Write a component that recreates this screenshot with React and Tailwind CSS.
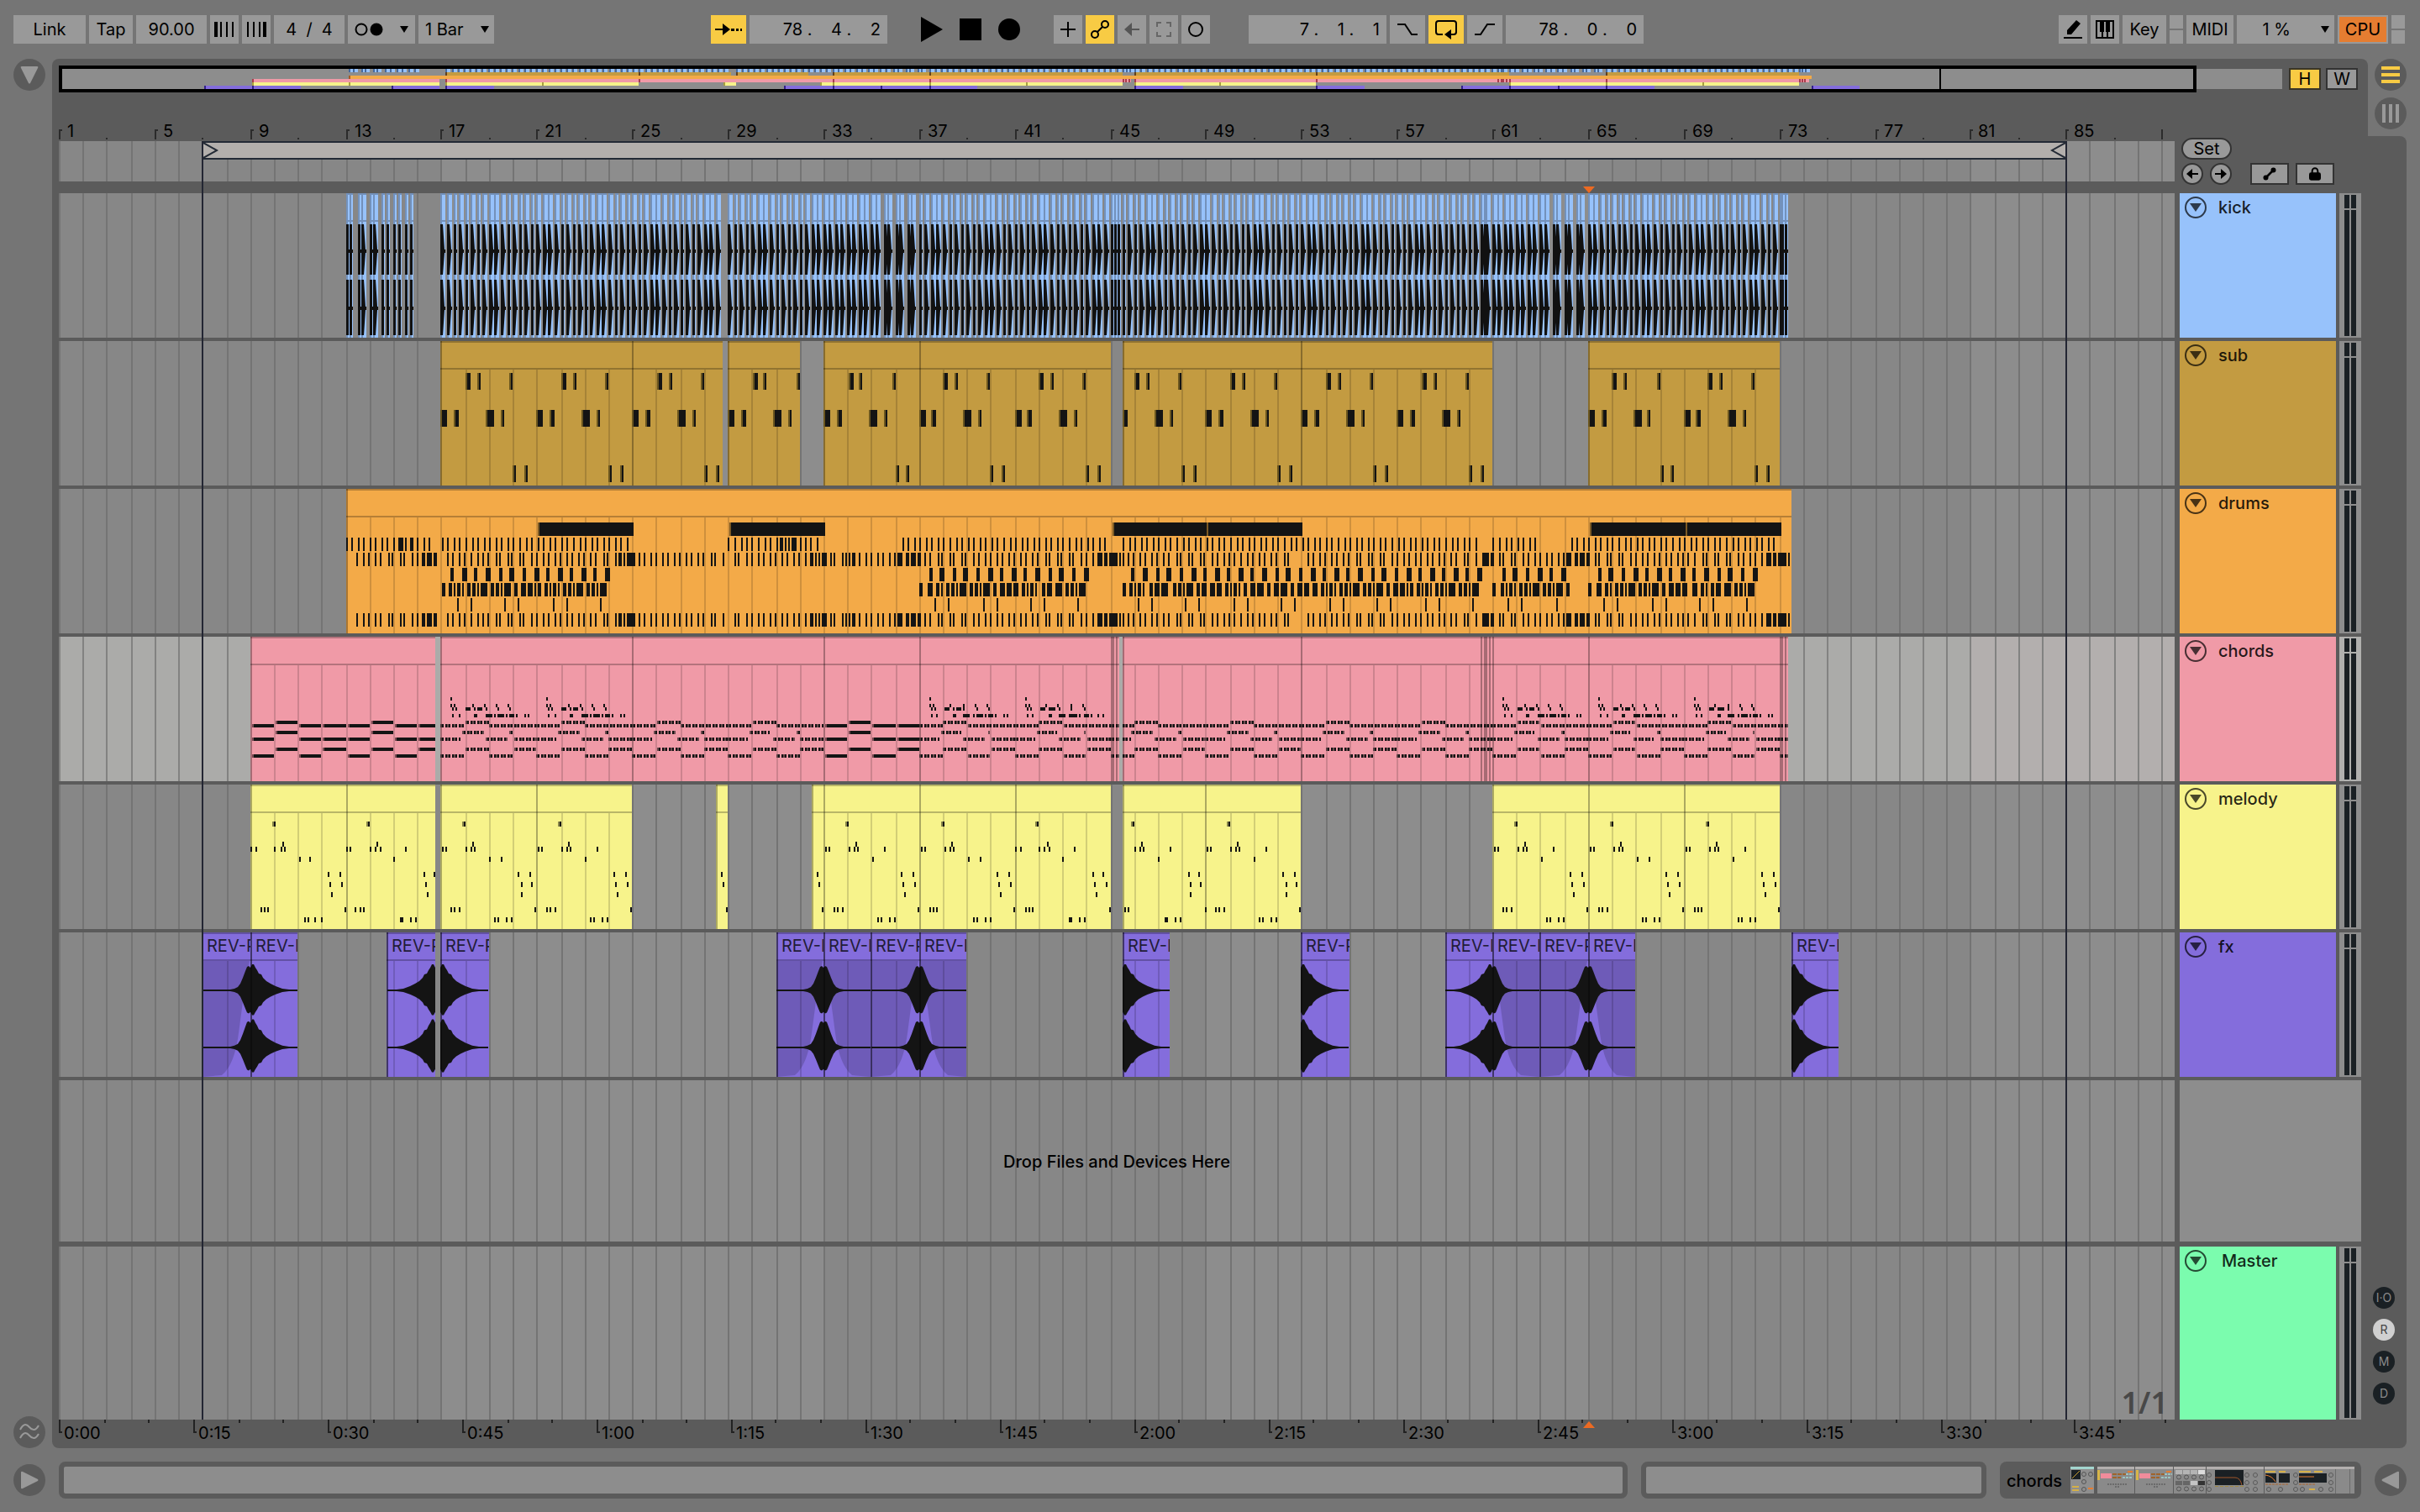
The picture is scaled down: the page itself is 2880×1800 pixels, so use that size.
import React from 'react';
import { Lock } from 'lucide-react';

const BAR = 28.435;
const LANE_W = 2518;
const NOTE = '#141414';

const snap = (px) => Math.round(px / 2) * 2;
const barX = (bar) => snap((bar - 1) * BAR);
const stepX = (bar, step) => snap((bar - 1) * BAR + (step * BAR) / 16);
const pct = (px, total = LANE_W) => `${(px / total) * 100}%`;
const range = (from, to, by = 1) => {
  const out = [];
  for (let i = from; i < to; i += by) out.push(i);
  return out;
};

/* ---------- song data: bars and sixteenth steps ---------- */

const KICK_BREAK = [0, 3.4, 8, 11.3, 15.8, 19, 23.6, 27, 31.5, 35, 40.5, 42.8, 48.4, 50.6, 56.3, 58.5];
const KICKS = [
  [13, [0, 2.4, 8, 10.4, 16, 18.4, 23.6, 27, 31.5, 35, 39.5, 43]],
  [17, range(0, 188, 4)],
  [29, range(0, 64, 4)],
  [33, KICK_BREAK],
  [37, range(0, 128, 4)],
  [45, [0, 2.2, 4.5]],
  [45.5, range(0, 240, 4)],
  [60.5, [0, 2.4, 3.5]],
  [61, KICK_BREAK],
  [65, range(0, 128, 4)],
  [73, [0, 1.2, 3.4]],
];

const SUB_CLIPS = [[17, 25], [25, 28.8], [29, 32], [33, 37], [37, 45], [45.5, 53], [53, 61], [65, 73]];
const SUB_NOTES = [
  [38, 16.4, 3.4], [38, 24, 2.3], [38, 45.7, 2.3],
  [82, 0, 4], [82, 8.6, 3], [82, 30, 5.7], [82, 40, 2.3],
  [148, 48, 2], [148, 55.7, 2],
];

const MELODY_CLIPS = [
  [9, 13], [13, 16.76], [17, 21], [21, 25], [28.5, 29], [32.5, 33], [33, 37], [37, 41],
  [41, 45], [45.5, 49], [49, 53], [61, 65], [65, 69], [69, 73],
];
const MELODY_NOTES = [
  [44, 14.4, 2.2], [68, 21.2, 1],
  [74, 0.8, 1], [74, 3.2, 1], [74, 16.6, 1], [74, 20, 1], [74, 22.4, 1],
  [104, 51.7, 1], [104, 59.4, 1], [116, 53, 1], [116, 60.6, 1], [128, 53.9, 1],
  [146, 6.6, 1], [146, 9, 1], [146, 12, 1], [146, 63, 1],
  [158, 36, 1], [158, 38, 1], [158, 43.6, 1], [158, 47, 1],
];
const MELODY_LONG = [9, 17, 37, 65];

const CHORD_CLIPS = [
  [9, 16.76], [17, 25], [25, 33], [33, 37], [37, 45], [45, 45.1], [45.1, 45.25], [45.25, 45.36],
  [45.5, 53], [53, 60.5], [60.5, 60.66], [60.66, 60.73], [60.73, 60.86], [60.86, 61],
  [61, 65], [65, 73], [73, 73.08], [73.08, 73.2], [73.2, 73.4],
];
const CHORD_HOLDS = [
  [104, 0, 16], [120, 0, 16], [140, 0, 16],
  [100, 16, 32], [112, 16, 32], [132, 16, 32],
  [104, 32, 48], [120, 32, 48], [140, 32, 48],
  [104, 48, 64], [120, 48, 64], [132, 48, 64],
];
const CHORD_STABS = [
  [100, 16.5, 32], [104, 0, 16], [104, 32.5, 64], [112, 14.5, 28.5], [112, 46, 48],
  [120, 0, 13.5], [120, 30, 44.5], [120, 48.5, 64], [132, 16.5, 32], [132, 48.5, 64],
  [140, 0, 16], [140, 32.5, 48],
];
const CHORD_TOPS = [
  [72, 6.6, 1], [80, 6.6, 1], [80, 9, 1], [80, 21, 1], [80, 29, 1], [80, 37, 1], [80, 45, 1],
  [84, 7.7, 1], [84, 10, 1], [84, 16.7, 3.4], [84, 22.4, 1], [84, 24.4, 3.4], [84, 30, 1], [84, 38, 1], [84, 46, 1],
  [92, 7.7, 1], [92, 12, 1], [92, 22.4, 2], [92, 30, 4.6], [92, 36, 1], [92, 38, 4.3], [92, 43.6, 1],
  [92, 46, 3.4], [92, 50.5, 1], [92, 56, 1], [92, 58.3, 1],
];

const HAT_LOOP = [
  4, 7.5, 11.8, 15.2, 19.8, 23.3, 27.6, 31, 36.7, 38.8, 44.5, 46.8, 52.3, 54.5, 60.3, 63.7,
  68, 71.3, 75.5, 79.2, 84, 87.4, 91.7, 95, 99.5, 103, 108.5, 110.8,
];
const FILL = [[116.5], [118.7, 2.3], [122], [124.3, 5.5]];
const SNARES = [
  [13, [6.6, 11.5, 14.6, 19, 22.4, 28, 30, 36, 38, 44, 47, [50.5, 2.5], [54, 3.5], [58.5, 2]]],
  [17, [...HAT_LOOP, ...FILL]],
  [25, [4, 7.5, 11.8, 15.2, 19.8, 23.3, 27.6, 31, 35.6, 38.8, 43.4, 46.8, 52.3, 54.5, 60.3]],
  [29, [3.7, 6, 11.8, 15.2, 19.5, 23, 27.6, 30.7, 35.3, 38.8, 43, 46.5, 51, [54.6, 2], 57.7, 60, [62.3, 3.5]]],
  [33, [4, 6.3, 11.8, 14, 16.4, [18.7, 2], 23, 27.6, 31, 35.3, 38.8, 43.4, 46.8, [48.8, 3.4], [54.5, 2.3], [58, 3.4], [62.6, 2]]],
  [37, [2.7, 6.5, 11.7, 14.2, 19.6, 22, 27.5, 29.7, 35.5, 38.7, 43.4, 46.6, 51.3, 54.6, 59.2, 62.5, 67, 70.4, 74.7, 78.3,
    83.7, 86.2, 91.7, 94, 99.6, 102, 107.5, 110.7, 115.4, [118.7, 3.5], [123.3, 2], [126.6, 4], 131.2, 133.4, 135.6]],
  [45, HAT_LOOP.map((s) => s + 7)],
  [53, [...HAT_LOOP, 116, [120.5, 2.3], [123.5, 2], [126, 2.4]]],
  [61, [4, 6.2, 11.8, 14, 19.8, 23, 27.6, 31, 35.4, 38.8, 43.4, 46.8, [48.8, 3.4], [54.6, 2.2], [58, 3.4], [62.3, 2.3]]],
  [65, [4, 6.3, 12, 14.2, 20, 22, 27.6, 31, 35.6, 39, 43.4, 46.8, 51.4, 54.8, 59.2, 62.6, 66.6, 70.4, 76, 78.4, 83.8, 86,
    91.8, 94.2, 99.6, 103, 107.4, 111, 115.4, [118.9, 3.4], [123.5, 2], [126.6, 4], 131, 133.2]],
];
const HATS = [
  [13, [0, 3, 8, 11, 16, 19, 24, 27, 32, [35, 3.4], 39.5, [43, 2], 47, 51.5, 55]],
  [17, range(0, 127, 4)],
  [29, [0, 4, 8, 12, 15, 20, 24, 28, 32, [34.4, 2], 37.6, 40, [42, 2.2], 45, 47.6, 51, 55, 59]],
  [36, range(4, 16, 4)],
  [37, range(0, 127, 4)],
  [45.5, range(0, 238, 4)],
  [61, range(0, 30, 4)],
  [64, range(4, 16, 4)],
  [65, range(0, 127, 4)],
];
const TOM_BAR = [
  [0, 2.4], [5, 2.3], [8, 1], [10.6, 2.3], [14, 1], [17.5, 2.3], [21, 2], [24, 1], [26.4, 4.6],
  [33.3, 2.3], [36.7, 2], [40, 1], [42.2, 4.6], [49, 2.3], [53.4, 3.4], [58, 3.4], [62.6, 1],
];
const RIM = [10, 19, 42, 51];
const DRUM_PARTS = [
  { start: 17, end: 24 }, { start: 37, end: 44 }, { start: 45.5, end: 60.4 }, { start: 61, end: 64.2 }, { start: 65, end: 72 },
];
const CRASHES = [[21, 25], [29, 33], [45, 49], [49, 53], [65, 69], [69, 73]];

const FX_CLIPS = [
  { start: 7, end: 9, shape: 'riseNarrow' },
  { start: 9, end: 11, shape: 'fall' },
  { start: 14.75, end: 16.76, shape: 'rise' },
  { start: 17, end: 19, shape: 'fall' },
  { start: 31, end: 33, shape: 'riseNarrow' },
  { start: 33, end: 35, shape: 'fallNarrow' },
  { start: 35, end: 37, shape: 'riseNarrow' },
  { start: 37, end: 39, shape: 'fallNarrow' },
  { start: 45.5, end: 47.5, shape: 'fall' },
  { start: 53, end: 55, shape: 'fall' },
  { start: 59, end: 61, shape: 'rise' },
  { start: 61, end: 63, shape: 'fallNarrow' },
  { start: 63, end: 65, shape: 'riseNarrow' },
  { start: 65, end: 67, shape: 'fallNarrow' },
  { start: 73.5, end: 75.5, shape: 'fall' },
];

const TRACKS = [
  { name: 'kick', color: 'bg-[#97c2fb]' },
  { name: 'sub', color: 'bg-[#c39b41]' },
  { name: 'drums', color: 'bg-[#f3aa48]' },
  { name: 'chords', color: 'bg-[#f09aa7]', selected: true },
  { name: 'melody', color: 'bg-[#f7f38b]' },
  { name: 'fx', color: 'bg-[#846ddc]' },
];

/* ---------- arrangement drawing ---------- */

const LaneSvg = ({ height, selected, children }) => (
  <svg
    className="block h-full w-full"
    viewBox={`0 0 ${LANE_W} ${height}`}
    preserveAspectRatio="none"
    shapeRendering="crispEdges"
    aria-hidden="true"
  >
    {[1, 17, 33, 49, 65, 81].map((bar, i) => (
      <rect
        key={bar}
        x={barX(bar)}
        width={16 * BAR + 2}
        height={height}
        fill={selected ? (bar === 81 ? '#b3afae' : '#ababa9') : i % 2 ? '#8d8d8d' : '#878787'}
      />
    ))}
    {range(1, 90).map((bar) => (
      <rect key={bar} x={barX(bar)} width="2" height={height} fill={selected ? '#828281' : '#747474'} />
    ))}
    {children}
  </svg>
);

const Clip = ({ start, end, fill }) => {
  const x = barX(start);
  const w = barX(end) - x;
  return (
    <g>
      <rect x={x} width={w} height="172" fill={fill} />
      {range(Math.floor(start) + 1, end).map((bar) => (
        <rect key={bar} x={barX(bar)} y="34" width="2" height="138" fill="#000" opacity="0.15" />
      ))}
      <rect x={x} width={w} height="2" fill="#000" opacity="0.25" />
      <rect x={x} y="32" width={w} height="2" fill="#000" opacity="0.25" />
      <rect x={x} width="2" height="172" fill="#000" opacity="0.3" />
    </g>
  );
};

const Note = ({ bar, step, len = 1, y, h, faded }) => {
  const x = stepX(bar, step);
  const w = Math.max(2, snap((len * BAR) / 16));
  return (
    <g>
      <rect x={x} y={y} width={w} height={h} fill={NOTE} />
      {faded && w > 2 && <rect x={x} y={y} width="2" height={h} fill={faded} />}
    </g>
  );
};

const KickLane = () => {
  const hits = KICKS.flatMap(([bar, steps]) => steps.map((s) => [stepX(bar, s), stepX(bar, s + 3)]));
  return (
    <LaneSvg height={172}>
      {hits.map(([x, end], i) => (
        <rect key={i} x={x} width={end - x} height="172" fill="#97c2fb" />
      ))}
      {hits.map(([x, end], i) => {
        const w = end - x;
        return (
          <g key={i}>
            <rect x={x} width={w} height="2" fill="#7391bb" />
            <rect x={x} y="32" width={w} height="2" fill="#7391bb" />
            <rect x={x} width="2" height="172" fill="#7391bb" />
            <path
              shapeRendering="auto"
              fill="#111"
              d={`M${x} 37H${x + 3}L${x + w - 1} 67H${end}V71H${x + w - 1}L${x + 3} 97H${x}ZM${x} 103H${x + 3}L${x + w - 1} 135H${end}V139H${x + w - 1}L${x + 3} 169H${x}Z`}
            />
          </g>
        );
      })}
    </LaneSvg>
  );
};

const inClips = (clips, bar, step) => {
  const at = bar + step / 16;
  return clips.some(([a, b]) => at >= a - 0.01 && at < b - 0.02);
};

const SubLane = () => (
  <LaneSvg height={172}>
    {SUB_CLIPS.map(([a, b]) => (
      <Clip key={a} start={a} end={b} fill="#c39b41" />
    ))}
    {range(17, 73, 4).flatMap((bar) =>
      SUB_NOTES.filter(([, s]) => inClips(SUB_CLIPS, bar, s)).map(([y, s, len]) => (
        <Note key={`${bar}-${y}-${s}`} bar={bar} step={s} len={len} y={y} h={20} faded="#6b561f" />
      ))
    )}
  </LaneSvg>
);

const DrumRow = ({ y, rows }) =>
  rows.flatMap(([bar, steps]) =>
    steps.map((s) => {
      const [step, len] = Array.isArray(s) ? s : [s, 1];
      return <Note key={`${bar}-${step}`} bar={bar} step={step + 0.4} len={len} y={y} h={16} />;
    })
  );

const DrumsLane = () => (
  <LaneSvg height={172}>
    <Clip start={13} end={73.5} fill="#f3aa48" />
    {CRASHES.map(([a, b]) => (
      <g key={a}>
        <rect x={barX(a) + 2} y="40" width={barX(b) - barX(a)} height="16" fill={NOTE} />
        <rect x={barX(a) + 2} y="40" width="2" height="16" fill="#7d5a24" />
      </g>
    ))}
    <DrumRow y={58} rows={HATS} />
    <DrumRow y={76} rows={SNARES} />
    <DrumRow y={148} rows={SNARES} />
    {DRUM_PARTS.map(({ start, end }) => {
      const steps = (end - start) * 16;
      return (
        <g key={start}>
          <DrumRow
            y={94}
            rows={[[start, range(6, steps + 1, 8).map((s, i) => [s - (i % 2 ? 0.4 : 0), i % 2 ? 3.4 : 2])]]}
          />
          <DrumRow
            y={112}
            rows={[[start, range(0, steps, 64).flatMap((o) => TOM_BAR.map(([s, l]) => [s + o, l])).filter(([s]) => s < steps - 1)]]}
          />
          <DrumRow
            y={130}
            rows={[[start, range(0, steps, 64).flatMap((o) => RIM.map((s) => s + o)).filter((s) => s < steps - 1)]]}
          />
        </g>
      );
    })}
  </LaneSvg>
);

const Stab = ({ bar, y, from, to }) => {
  const a = stepX(bar, from);
  const b = stepX(bar, to);
  return (
    <g stroke={NOTE} strokeWidth="4">
      <path d={`M${a} ${y + 2}H${b}`} strokeDasharray="2 6" opacity="0.6" />
      <path d={`M${a + 2} ${y + 2}H${b}`} strokeDasharray="2 2" />
    </g>
  );
};

const ChordsLane = () => (
  <LaneSvg height={172} selected>
    {CHORD_CLIPS.map(([a, b]) => (
      <Clip key={a} start={a} end={b} fill="#f09aa7" />
    ))}
    {[9, 13, 33].flatMap((bar) =>
      CHORD_HOLDS.map(([y, a, b]) => {
        const x = stepX(bar, a) + 2;
        const end = Math.min(stepX(bar, b), bar === 13 ? barX(16.76) : LANE_W);
        return (
          <g key={`${bar}-${y}-${a}`}>
            <rect x={x} y={y} width={end - x} height="4" fill={NOTE} />
            <rect x={x} y={y} width="2" height="4" fill="#7a4a52" />
          </g>
        );
      })
    )}
    {[17, 21, 25, 29, 37, 41, 45, 49, 53, 57, 61, 65, 69].flatMap((bar) =>
      CHORD_STABS.map(([y, a, b]) => <Stab key={`${bar}-${y}-${a}`} bar={bar} y={y} from={a} to={b} />)
    )}
    {[104, 120, 140].map((y) => (
      <Stab key={y} bar={73} y={y} from={0} to={6} />
    ))}
    <rect x={barX(45.36)} width={barX(45.53) - barX(45.36)} height="172" fill="#ababa9" />
    {[17, 21, 37, 41, 61, 65, 69].flatMap((bar) =>
      CHORD_TOPS.map(([y, s, len]) => <Note key={`${bar}-${y}-${s}`} bar={bar} step={s} len={len} y={y} h={4} />)
    )}
  </LaneSvg>
);

const MelodyLane = () => (
  <LaneSvg height={172}>
    {MELODY_CLIPS.map(([a, b]) => (
      <Clip key={a} start={a} end={b} fill="#f7f38b" />
    ))}
    {range(9, 73, 4).flatMap((bar) => {
      const tail = MELODY_LONG.includes(bar) ? [[86, 32.4, 1], [86, 40.2, 1]] : [[86, 32.4, 1], [74, 40.2, 1]];
      return [...MELODY_NOTES, ...tail]
        .filter(([, s]) => inClips(MELODY_CLIPS, bar, s))
        .map(([y, s, len]) => (
          <Note key={`${bar}-${y}-${s}`} bar={bar} step={s} len={len} y={y} h={6} faded="#8a874b" />
        ));
    })}
  </LaneSvg>
);

/* envelope points: distance from the loud end, half height */
const WIDE = [[0, 27], [2, 31], [4, 31], [6, 27], [8, 24], [10, 20], [13, 19], [15, 15], [19, 11], [24, 8], [30, 5], [38, 2], [46, 1], [57, 1]];
const NARROW = [[0, 27], [2, 29], [4, 28], [6, 23], [9, 15], [12, 8], [15, 4], [19, 2], [24, 1], [57, 1]];

const wavePath = (x0, dir, pts, cy, up) => {
  const top = pts.map(([d, h]) => `${x0 + dir * d} ${cy - h * up}`);
  const bottom = [...pts].reverse().map(([d, h]) => `${x0 + dir * d} ${cy + h * 0.95}`);
  return `M${top.join('L')}L${bottom.join('L')}Z`;
};

const FxLane = () => (
  <LaneSvg height={172}>
    {FX_CLIPS.map(({ start, end, shape }) => {
      const a = barX(start);
      const b = barX(end);
      const rise = shape.startsWith('rise');
      const narrow = shape.endsWith('Narrow');
      const x0 = rise ? b : a;
      const dir = rise ? -1 : 1;
      const at = (d) => x0 + dir * Math.min(d, b - a);
      const pts = (narrow ? NARROW : WIDE).map(([d, h]) => [Math.min(d, b - a), h]);
      return (
        <g key={start}>
          <Clip start={start} end={end} fill="#846ddc" />
          {narrow && (
            <path
              shapeRendering="auto"
              fill="#000"
              opacity="0.16"
              d={`M${at(1)} 34L${at(6)} 60L${at(14)} 120Q${at(19)} 158 ${at(34)} 170L${at(57)} 172V34Z`}
            />
          )}
          <path shapeRendering="auto" fill={NOTE} d={wavePath(x0, dir, pts, 69, 1)} />
          <path shapeRendering="auto" fill={NOTE} d={wavePath(x0, dir, pts, 137, 1.08)} />
          <rect x={a} width="2" height="172" fill="#000" opacity="0.3" />
        </g>
      );
    })}
  </LaneSvg>
);

const LANES = { kick: KickLane, sub: SubLane, drums: DrumsLane, chords: ChordsLane, melody: MelodyLane, fx: FxLane };

const Lane = ({ track }) => {
  const Drawing = LANES[track.name];
  return (
    <div className="relative mb-1 h-[172px] overflow-hidden">
      <Drawing />
      {track.name === 'fx' &&
        FX_CLIPS.map(({ start, end }) => (
          <span
            key={start}
            className="absolute top-0.5 overflow-hidden pl-1.5 text-xl leading-7 whitespace-nowrap text-[#221c38]"
            style={{ left: pct(barX(start)), width: pct(barX(end) - barX(start)) }}
          >
            REV-P
          </span>
        ))}
    </div>
  );
};

/* ---------- overview ---------- */

const OV_BAR = 28.77;
const ovX = (bar) => Math.round((bar - 1) * OV_BAR);

const OverviewRow = ({ clips, y, fill, edge }) =>
  clips.map(([a, b]) => (
    <g key={a}>
      <rect x={ovX(a)} y={y} width={ovX(b) - ovX(a)} height="4" fill={fill} />
      <rect x={ovX(a)} y={y} width="2" height="4" fill={edge} />
    </g>
  ));

const Overview = () => (
  <div className="flex h-8 pr-3">
    <div className="relative flex-1 py-1">
      <svg className="block h-6 w-full bg-[#8d8d8d]" viewBox="0 0 2646 24" preserveAspectRatio="none" shapeRendering="crispEdges" aria-hidden="true">
        {KICKS.flatMap(([bar, steps]) =>
          steps.map((s) => (
            <g key={`${bar}-${s}`}>
              <rect x={ovX(bar + s / 16)} width="6" height="4" fill="#97c2fb" />
              <rect x={ovX(bar + s / 16)} width="2" height="4" fill="#44699f" />
            </g>
          ))
        )}
        <OverviewRow clips={SUB_CLIPS} y={4} fill="#c39b41" edge="#63401a" />
        <OverviewRow clips={[[13, 73.5]]} y={8} fill="#f3aa48" edge="#a85a20" />
        <OverviewRow clips={CHORD_CLIPS} y={12} fill="#f09aa7" edge="#a83d4c" />
        <OverviewRow clips={MELODY_CLIPS} y={16} fill="#f7f38b" edge="#a8a040" />
        <OverviewRow clips={FX_CLIPS.map((c) => [c.start, c.end])} y={20} fill="#846ddc" edge="#33208a" />
        <rect x="2238" width="2" height="24" fill="#000" />
      </svg>
      <div className="absolute inset-y-0 left-0 w-[96.15%] border-4 border-black" />
    </div>
    <div className="flex items-center gap-1.5 pl-2">
      <button className="h-[26px] w-[38px] border-2 border-[#3a3526] bg-[#f8cb44] leading-[22px]">H</button>
      <button className="h-[26px] w-[38px] border-2 border-[#333] bg-[#999] leading-[22px]">W</button>
    </div>
  </div>
);

/* ---------- toolbar ---------- */

const cell = 'flex h-[34px] items-center justify-center bg-[#999]';
const lit = 'flex h-[34px] items-center justify-center bg-[#f8cb44]';

const Caret = () => (
  <svg width="10" height="8" viewBox="0 0 10 8" aria-hidden="true">
    <path d="M0 0H10L5 8Z" />
  </svg>
);

const Field = ({ label, value, className }) => (
  <input aria-label={label} defaultValue={value} className={`h-[34px] bg-[#999] whitespace-pre ${className}`} />
);

const Nudge = ({ flip }) => (
  <svg width="24" height="18" viewBox="0 0 24 18" className={flip ? '-scale-x-100' : ''} aria-hidden="true">
    <path d="M0 0h4v18H0zM7 0h2v18H7zM14 0h2v18h-2zM21 0h2v18h-2z" />
  </svg>
);

const Punch = ({ out }) => (
  <svg width="24" height="16" viewBox="0 0 24 16" fill="none" stroke="#000" strokeWidth="2" aria-hidden="true">
    <path d={out ? 'M0 14H7L15 2H24' : 'M0 2H9L17 14H24'} />
  </svg>
);

const Toolbar = () => (
  <header className="flex h-[70px] items-start pt-[18px] pr-[18px] pl-4">
    <div className="flex gap-1">
      <button className={`${cell} w-[86px]`}>Link</button>
      <button className={`${cell} w-[52px]`}>Tap</button>
      <Field label="Tempo" value="90.00" className="w-[84px] text-center" />
      <button className={`${cell} w-[34px]`} aria-label="Nudge down"><Nudge /></button>
      <button className={`${cell} w-[34px]`} aria-label="Nudge up"><Nudge flip /></button>
      <Field label="Time signature" value="4  /  4" className="w-[84px] text-center" />
      <button className={`${cell} w-20 gap-5`} aria-label="Metronome">
        <svg width="34" height="18" viewBox="0 0 34 18" aria-hidden="true">
          <circle cx="8" cy="9" r="6.5" fill="none" stroke="#000" strokeWidth="2" />
          <circle cx="26" cy="9" r="7.5" />
        </svg>
        <Caret />
      </button>
      <div className="relative">
        <select aria-label="Quantization" className="h-[34px] w-[90px] appearance-none bg-[#999] pl-2">
          <option>1 Bar</option>
        </select>
        <span className="pointer-events-none absolute inset-y-0 right-1.5 flex items-center"><Caret /></span>
      </div>
    </div>

    <div className="ml-[258px] flex gap-1">
      <button className={`${lit} w-[42px]`} aria-label="Follow">
        <svg width="32" height="14" viewBox="0 0 32 14" aria-hidden="true">
          <path d="M0 6H9V0L18 7L9 14V8H0ZM19 6h4v3h-4zM25 6h3v3h-3zM30 6h2v3h-2z" />
        </svg>
      </button>
      <Field label="Arrangement position" value="78 .    4 .    2" className="w-[164px] pr-2 text-right" />
      <div className="flex items-center gap-5 px-9">
        <button aria-label="Play"><svg width="26" height="30" viewBox="0 0 26 30"><path d="M0 0L26 15L0 30Z" /></svg></button>
        <button aria-label="Stop" className="h-[26px] w-[26px] bg-black" />
        <button aria-label="Record" className="h-[26px] w-[26px] rounded-full bg-black" />
      </div>
      <button className={`${cell} w-[34px]`} aria-label="Overdub">
        <svg width="18" height="18" viewBox="0 0 18 18"><path d="M8 0h2v8h8v2h-8v8H8v-8H0V8h8z" /></svg>
      </button>
      <button className={`${lit} w-[34px]`} aria-label="Automation arm">
        <svg width="22" height="22" viewBox="0 0 22 22" fill="none" stroke="#000" strokeWidth="2">
          <circle cx="5" cy="17" r="4" /><circle cx="17" cy="5" r="4" /><path d="M8 14L14 8" />
        </svg>
      </button>
      <button className={`${cell} w-[34px] text-[#555]`} aria-label="Re-enable automation">
        <svg width="18" height="16" viewBox="0 0 18 16" fill="currentColor"><path d="M0 8L9 0V7H18V9H9V16Z" /></svg>
      </button>
      <button className={`${cell} w-[34px] text-[#666]`} aria-label="Capture">
        <svg width="18" height="18" viewBox="0 0 18 18" fill="none" stroke="currentColor" strokeWidth="2">
          <path d="M1 6V1H6M12 1H17V6M17 12V17H12M6 17H1V12" />
        </svg>
      </button>
      <button className={`${cell} w-[34px]`} aria-label="Session record">
        <svg width="20" height="20" viewBox="0 0 20 20"><circle cx="10" cy="10" r="8" fill="none" stroke="#000" strokeWidth="2" /></svg>
      </button>
      <Field label="Loop start" value="7 .    1 .    1" className="ml-[42px] w-[164px] pr-2 text-right" />
      <button className={`${cell} w-[42px]`} aria-label="Punch in"><Punch /></button>
      <button className={`${lit} w-[42px]`} aria-label="Loop">
        <svg width="26" height="24" viewBox="0 0 26 24" fill="none" stroke="#000" strokeWidth="2">
          <path d="M9 18H4Q1 18 1 15V5Q1 2 4 2H22Q25 2 25 5V15Q25 18 22 18H18" />
          <path d="M19 12V24L11 18Z" fill="#000" stroke="none" />
        </svg>
      </button>
      <button className={`${cell} w-[42px]`} aria-label="Punch out"><Punch out /></button>
      <Field label="Loop length" value="78 .    0 .    0" className="w-[164px] pr-2 text-right" />
    </div>

    <div className="ml-auto flex gap-1">
      <button className={`${cell} w-[34px]`} aria-label="Draw mode">
        <svg width="22" height="22" viewBox="0 0 22 22"><path d="M4 17V12L15 0L20 4L9 17ZM0 20H22V22H0Z" /></svg>
      </button>
      <button className={`${cell} w-[34px]`} aria-label="Computer MIDI keyboard">
        <svg width="22" height="22" viewBox="0 0 22 22">
          <path d="M1 1H21V21H1ZM8 13V21M14 13V21" fill="none" stroke="#000" strokeWidth="2" />
          <path d="M5 1h5v13H5zM12 1h5v13h-5z" />
        </svg>
      </button>
      <button className={`${cell} w-[52px]`}>Key</button>
      <InOut />
      <button className={`${cell} w-14`}>MIDI</button>
      <button className={`${cell} w-[116px] justify-end gap-9 pr-1.5`} aria-label="CPU load">
        <span className="whitespace-nowrap">1 %</span>
        <Caret />
      </button>
      <button className="h-[34px] w-[60px] border-2 border-[#999] bg-[#e57d31]">CPU</button>
      <InOut />
    </div>
  </header>
);

const InOut = () => (
  <div className="flex h-[34px] w-4 flex-col gap-0.5">
    <span className="flex-1 bg-[#999]" />
    <span className="flex-1 bg-[#999]" />
  </div>
);

/* ---------- rulers ---------- */

const BarRuler = () => (
  <div className="relative h-[58px] shrink-0 text-xl leading-6">
    {range(1, 90, 4).map((bar) => (
      <div
        key={bar}
        className="absolute bottom-0.5 h-3 border-l-2 border-[#2b2b2b]"
        style={{ left: pct(barX(bar)) }}
      >
        {bar < 89 && <div className="h-0.5 w-0.5 bg-[#2b2b2b]" />}
        {bar < 89 && <span className="absolute -top-2.5 left-2">{bar}</span>}
      </div>
    ))}
    {range(3, 89, 4).map((bar) => (
      <div key={bar} className="absolute bottom-0.5 h-0.5 w-0.5 bg-[#2b2b2b]" style={{ left: pct(barX(bar)) }} />
    ))}
  </div>
);

const QUARTER_MIN = 159.93;
const TimeRuler = () => (
  <div className="relative h-[34px] shrink-0 text-xl leading-6">
    {range(0, 16).map((i) => {
      const secs = i * 15;
      return (
        <div
          key={i}
          className="absolute top-0 h-4 border-l-2 border-[#222]"
          style={{ left: pct(snap(i * QUARTER_MIN)) }}
        >
          <div className="mt-3.5 h-0.5 w-0.5 bg-[#222]" />
          <span className="absolute top-1 left-1">
            {Math.floor(secs / 60)}:{String(secs % 60).padStart(2, '0')}
          </span>
        </div>
      );
    })}
    {range(0, 48)
      .filter((i) => i % 3)
      .map((i) => (
        <div
          key={i}
          className="absolute top-0 h-1 w-0.5 bg-[#222]"
          style={{ left: pct(snap((i * QUARTER_MIN) / 3)) }}
        />
      ))}
    <svg className="absolute top-0.5 -ml-1.5" style={{ left: pct(barX(65)) }} width="14" height="8" aria-hidden="true">
      <path d="M7 0L14 8H0Z" fill="#ec6a22" />
    </svg>
  </div>
);

const LoopStrip = () => (
  <div className="relative mb-[14px] h-12 shrink-0">
    <LaneSvg height={48} />
    <div
      className="absolute top-0 flex h-[22px] items-center justify-between border-2 border-[#232a35] bg-[#b3afac]"
      style={{ left: pct(barX(7)), width: pct(barX(85) - barX(7) + 2) }}
    >
      <svg width="18" height="18" fill="none" stroke="#232a35" strokeWidth="2" aria-hidden="true"><path d="M0 0L16 9L0 18" /></svg>
      <svg width="18" height="18" fill="none" stroke="#232a35" strokeWidth="2" aria-hidden="true"><path d="M18 0L2 9L18 18" /></svg>
    </div>
    <svg className="absolute top-[54px] -ml-1.5" style={{ left: pct(barX(65)) }} width="14" height="8" aria-hidden="true">
      <path d="M0 0H14L7 8Z" fill="#ec6a22" />
    </svg>
  </div>
);

/* ---------- track headers ---------- */

const Meter = ({ light }) => (
  <div className={`flex w-[26px] gap-0.5 px-1.5 py-0.5 ${light ? 'bg-[#b0b0ae]' : 'bg-[#8d8d8d]'}`}>
    {[0, 1].map((i) => (
      <div key={i} className="flex w-1.5 flex-col gap-0.5">
        <span className="h-4 bg-[#1a2024]" />
        <span className="flex-1 bg-[#1a2024]" />
      </div>
    ))}
  </div>
);

const TrackHeader = ({ name, color, selected, className = 'mb-1 h-[172px]' }) => (
  <div className={`flex gap-1 ${className}`}>
    <div className={`flex flex-1 items-start gap-3.5 pt-1 pl-1.5 ${color}`}>
      <button aria-label={`Fold ${name}`} className="flex h-[26px] w-[26px] items-center justify-center rounded-full border-2 border-black/70">
        <svg width="14" height="10" viewBox="0 0 14 10" className="fill-black/70"><path d="M0 0H14L7 10Z" /></svg>
      </button>
      <span className={`leading-[26px] font-medium text-black/85 ${name === 'Master' ? 'pl-1' : ''}`}>{name}</span>
    </div>
    <Meter light={selected} />
  </div>
);

const HeaderTools = () => (
  <div className="h-[120px] shrink-0 pt-[54px] pl-0.5">
    <button className="block h-[26px] w-[60px] rounded-full border-2 border-[#333] bg-[#999] leading-[22px]">Set</button>
    <div className="mt-1 flex items-center">
      {['Previous locator', 'Next locator'].map((label, i) => (
        <button key={label} aria-label={label} className="mr-2 flex h-[26px] w-[26px] items-center justify-center rounded-full border-2 border-[#333] bg-[#999]">
          <svg width="14" height="12" viewBox="0 0 14 12" className={i ? '-scale-x-100' : ''}><path d="M0 6L7 0V5H14V7H7V12Z" /></svg>
        </button>
      ))}
      <button aria-label="Automation mode" className="mr-2 ml-3.5 flex h-[26px] w-[46px] items-center justify-center border-2 border-[#333] bg-[#999]">
        <svg width="16" height="16" viewBox="0 0 16 16">
          <circle cx="3.5" cy="12.5" r="3" /><circle cx="12.5" cy="3.5" r="3" /><path d="M4 12L12 4" stroke="#000" strokeWidth="2.5" />
        </svg>
      </button>
      <button aria-label="Lock envelopes" className="flex h-[26px] w-[46px] items-center justify-center border-2 border-[#333] bg-[#999]">
        <Lock size={16} strokeWidth={3} className="[&>rect]:fill-black" />
      </button>
    </div>
  </div>
);

/* ---------- side controls and bottom bar ---------- */

const Round = ({ label, children }) => (
  <button aria-label={label} className="flex h-[38px] w-[38px] shrink-0 items-center justify-center rounded-full bg-[#5b5b5b] text-[#999]">
    {children}
  </button>
);

const Badge = ({ children, on }) => (
  <button
    className={`h-[26px] w-[26px] rounded-full text-sm leading-none ${on ? 'bg-[#d0d0d0] text-[#444]' : 'bg-[#1a2024] text-[#8a8a8a]'}`}
  >
    {children}
  </button>
);

const DeviceStrip = () => (
  <svg width="338" height="32" viewBox="0 0 338 32" aria-hidden="true">
    <rect width="28" height="32" fill="#8f8f8f" />
    <rect width="28" height="3" fill="#a3d6cf" />
    <rect x="1" y="4" width="11" height="11" fill="#1a2024" />
    <path d="M2 14L11 5" stroke="#c9a032" />
    <path d="M2 24h8M2 28h8" stroke="#d4b048" strokeWidth="2" />
    <path d="M21 26h6" stroke="#e57d31" strokeWidth="2" />
    <g fill="none" stroke="#555">
      <circle cx="16" cy="9" r="2.5" />
      <circle cx="24" cy="9" r="2.5" />
      <circle cx="16" cy="18" r="2.5" />
      <circle cx="16" cy="27" r="2.5" />
    </g>
    <rect x="32" width="306" height="32" fill="#8a8a8a" />
    <rect x="32" width="306" height="3" fill="#b3afae" />
    {[32, 78].map((x) => (
      <g key={x}>
        <rect x={x} y="4" width="3" height="12" fill="#d8b548" />
        <rect x={x + 4} y="8" width="13" height="6" fill="#f08c9b" />
        <path d={`M${x + 18} 9h16M${x + 18} 13h10`} stroke="#a0642c" strokeWidth="2" strokeDasharray="5 1" />
        <path d={`M${x + 34} 9h9M${x + 30} 13h12`} stroke="#9cc4c0" strokeWidth="2" strokeDasharray="3 1" />
        <rect x={x + 36} y="5" width="6" height="2" fill="#e57d31" />
        <path d={`M${x + 12} 21h24M${x + 21} 24h5`} stroke="#4d4d4d" strokeDasharray="2 1" />
        <rect x={x + 44} width="1" height="32" fill="#5b5b5b" />
      </g>
    ))}
    {[125, 134, 143, 152].map((x, i) => (
      <g key={x}>
        <rect x={x} y="4" width="8" height="5" fill={i === 3 ? '#dcdcdc' : '#b4b4b4'} />
        <rect x={x} y="17" width="8" height="5" fill={i === 3 ? '#333' : i === 2 ? '#c4c4c4' : '#666'} />
        <circle cx={x + 4} cy="12.5" r="2.5" fill="none" stroke="#555" />
        <circle cx={x + 4} cy="26.5" r="2.5" fill="none" stroke="#555" />
      </g>
    ))}
    {[165, 210, 220, 268, 310].map((x) => (
      <g key={x} fill="none" stroke="#5a5a5a">
        <circle cx={x} cy="10" r="2.5" />
        <circle cx={x} cy="19" r="2.5" />
        <circle cx={x} cy="27" r="2.5" />
      </g>
    ))}
    <rect x="172" y="4" width="34" height="18" fill="#1a2024" />
    <path d="M172 13H196Q202 13 204 22" stroke="#a0562a" fill="none" />
    <path d="M172 23.5H206" stroke="#a08a42" strokeDasharray="4 2" />
    <rect x="161" width="1" height="32" fill="#5b5b5b" />
    <rect x="230" width="1" height="32" fill="#5b5b5b" />
    <rect x="232" y="8" width="13" height="11" fill="#1a2024" />
    <rect x="248" y="8" width="13" height="11" fill="#1a2024" />
    <rect x="272" y="8" width="33" height="11" fill="#1a2024" />
    <path d="M232 10Q240 11 244 18M272 12H290" stroke="#e57d31" fill="none" />
    <path d="M232 6h12M248 6h8M272 6h14M290 6h10M284 27h7" stroke="#d4b048" strokeWidth="2" />
    <path d="M232 21h28M272 21h20" stroke="#b0642c" strokeDasharray="3 1" />
    {[236, 250, 276, 298].map((x) => (
      <circle key={x} cx={x} cy="27" r="2.5" fill="none" stroke="#555" />
    ))}
    <path d="M315.5 3V32M332.5 3V32" stroke="#6b6b6b" />
  </svg>
);

const BottomBar = () => (
  <footer className="flex h-[76px] items-center px-4">
    <Round label="Show info view">
      <svg width="24" height="24" viewBox="0 0 24 24" fill="currentColor"><path d="M2 3Q2 1 4 2L22 11Q23 12 22 13L4 22Q2 23 2 21Z" /></svg>
    </Round>
    <div className="ml-4 h-11 flex-1 rounded-lg border-6 border-[#5b5b5b] bg-[#8d8d8d]" />
    <div className="ml-4 h-11 w-[411px] rounded-lg border-6 border-[#5b5b5b] bg-[#8d8d8d]" />
    <div className="mr-4 ml-4 flex h-11 w-[430px] items-center justify-between rounded-lg bg-[#5b5b5b] px-2">
      <span className="pt-0.5 font-medium">chords</span>
      <DeviceStrip />
    </div>
    <Round label="Show clip view">
      <svg width="24" height="24" viewBox="0 0 24 24" fill="currentColor"><path d="M22 3Q22 1 20 2L2 11Q1 12 2 13L20 22Q22 23 22 21Z" /></svg>
    </Round>
  </footer>
);

const Playhead = ({ bar }) => (
  <div className="absolute top-[58px] bottom-[34px] w-0.5 bg-[#232633]" style={{ left: pct(barX(bar)) }} />
);

const App = () => {
  return (
    <div className="flex min-h-screen flex-col bg-[#757575] font-['Inter',sans-serif] text-xl leading-6 text-black">
      <Toolbar />
      <div className="flex flex-1">
        <div className="flex w-[62px] shrink-0 flex-col justify-between pl-4">
          <Round label="Show browser">
            <svg width="24" height="24" viewBox="0 0 24 24" fill="currentColor"><path d="M3 2Q1 2 2 4L11 22Q12 23 13 22L22 4Q23 2 21 2Z" /></svg>
          </Round>
          <Round label="Groove pool">
            <svg width="24" height="20" viewBox="0 0 24 20" fill="none" stroke="currentColor" strokeWidth="2">
              <path d="M1 7Q6 -3 12 4T23 2M1 17Q6 7 12 14T23 12" />
            </svg>
          </Round>
        </div>

        <main className="flex flex-1 flex-col rounded-l-lg rounded-tr-lg bg-[#5b5b5b] pt-2 pl-2">
          <Overview />
          <div className="flex flex-1 pr-2">
            <section aria-label="Arrangement" className="relative flex flex-1 flex-col">
              <BarRuler />
              <LoopStrip />
              {TRACKS.map((track) => (
                <Lane key={track.name} track={track} />
              ))}
              <div className="relative mb-1.5 h-48">
                <LaneSvg height={192} />
                <p className="absolute inset-0 flex items-center justify-center pt-0.5 font-medium">Drop Files and Devices Here</p>
              </div>
              <div className="relative min-h-[206px] flex-1">
                <div className="absolute inset-0">
                  <LaneSvg height={206} />
                </div>
                <span className="absolute right-2 bottom-0 font-['Noto_Sans',sans-serif] text-4xl font-semibold text-[#484848]">1/1</span>
              </div>
              <TimeRuler />
              <Playhead bar={7} />
              <Playhead bar={85} />
            </section>

            <aside className="ml-1.5 flex w-[216px] flex-col">
              <HeaderTools />
              {TRACKS.map((track) => (
                <TrackHeader key={track.name} {...track} />
              ))}
              <div className="mb-1.5 h-48 bg-[#8d8d8d]" />
              <TrackHeader name="Master" color="bg-[#7bfcae]" className="flex-1" />
              <div className="h-[34px]" />
            </aside>
          </div>
        </main>

        <div className="flex w-[62px] shrink-0 flex-col pr-4">
          <div className="flex h-[92px] flex-col gap-2 pl-2">
            <Round label="Arrangement view">
              <svg width="22" height="20" fill="#f8cb44"><path d="M0 0h22v4H0zM0 8h22v4H0zM0 16h22v4H0z" /></svg>
            </Round>
            <Round label="Session view">
              <svg width="20" height="22" fill="currentColor"><path d="M0 0h4v22H0zM8 0h4v22H8zM16 0h4v22h-4z" /></svg>
            </Round>
          </div>
          <div className="flex flex-1 flex-col justify-end gap-3 rounded-r-lg bg-[#5b5b5b] pb-[52px] pl-1.5">
            <Badge>I·O</Badge>
            <Badge on>R</Badge>
            <Badge>M</Badge>
            <Badge>D</Badge>
          </div>
        </div>
      </div>
      <BottomBar />
    </div>
  );
};

export default App;
